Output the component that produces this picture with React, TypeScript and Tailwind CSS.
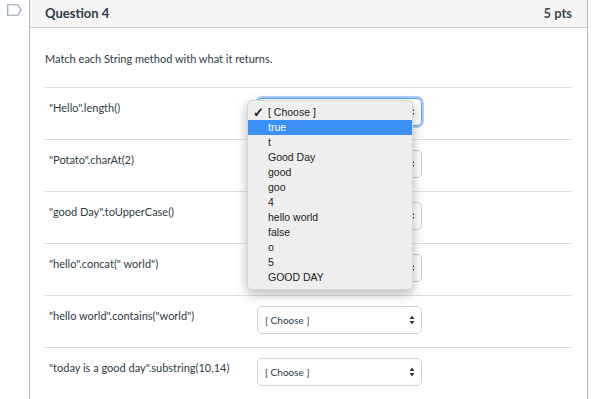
import React from "react";

const rows = [
  '"Hello".length()',
  '"Potato".charAt(2)',
  '"good Day".toUpperCase()',
  '"hello".concat(" world")',
  '"hello world".contains("world")',
  '"today is a good day".substring(10,14)',
];

const options = [
  "[ Choose ]",
  "true",
  "t",
  "Good Day",
  "good",
  "goo",
  "4",
  "hello world",
  "false",
  "o",
  "5",
  "GOOD DAY",
];

function Arrows() {
  return (
    <svg width="6" height="10" viewBox="0 0 6 10" className="text-[#2d3b45]">
      <path d="M3 0.5 L5.5 4 H0.5 Z" fill="currentColor" />
      <path d="M3 9.5 L5.5 6 H0.5 Z" fill="currentColor" />
    </svg>
  );
}

// covered = the open menu lies over it, so its label can't be seen
function Select({ focused, covered }: { focused?: boolean; covered?: boolean }) {
  return (
    <div
      className={
        "flex items-center justify-between w-[165px] h-[28px] rounded-[5px] bg-white pl-[7px] pr-[6px] text-[10px] text-[#2d3b45] " +
        (focused
          ? "border border-[#5aa1ee] shadow-[0_0_0_2px_rgba(110,170,240,0.55)]"
          : "border border-[#c7cdd1]")
      }
    >
      <span>{covered ? "" : "[ Choose ]"}</span>
      <Arrows />
    </div>
  );
}

function Menu() {
  return (
    <div className="absolute left-[-10px] top-[12px] w-[166px] rounded-[5px] bg-[#eeeeee] py-[4px] shadow-[0_4px_12px_rgba(0,0,0,0.28)] border border-[#d6d6d6] z-10 font-['Liberation_Sans',Arial,sans-serif] text-[10.5px] text-[#222]">
      {options.map((opt, i) => (
        <div
          key={i}
          className={
            "relative h-[15px] leading-[15px] pl-[20px] " +
            (i === 1 ? "bg-[#3a90f4] text-white" : "")
          }
        >
          {i === 0 && (
            <span className="absolute left-[5px] top-0 font-bold text-[13px]">✓</span>
          )}
          {opt}
        </div>
      ))}
    </div>
  );
}

export default function App() {
  return (
    <div className="w-[610px] h-[399px] overflow-hidden bg-white flex font-['Lato',sans-serif] text-[#2d3b45]">
      {/* bookmark gutter */}
      <div className="w-[29px] pt-[4px] pl-[7px]">
        <svg width="15" height="12" viewBox="0 0 15 12">
          <path
            d="M0.75 0.75 H11 L14 6 L11 11.25 H0.75 Z"
            fill="none"
            stroke="#8da2b8"
            strokeWidth="1.2"
          />
        </svg>
      </div>

      {/* question card */}
      <div className="w-[559px] h-full border-l border-r border-[#b5b5b5] flex flex-col">
        <div className="h-[28px] bg-[#f5f5f5] border-b border-[#c7cdd1] flex items-center justify-between pl-[15px] pr-[15px]">
          <h2 className="text-[13px] font-bold">Question 4</h2>
          <span className="text-[13px] font-bold text-[#3d4a54]">5 pts</span>
        </div>

        <div className="px-[15px]">
          <p className="text-[11px] leading-[14px] pt-[24px] pb-[21px]">
            Match each String method with what it returns.
          </p>

          {rows.map((label, i) => (
            <div key={i} className="h-[52px] border-t border-[#dcdfe2] flex">
              <div className="w-[212px] pl-[4px] pt-[13px] text-[11px] leading-[14px]">
                {label}
              </div>
              <div className="relative pt-[10px]">
                <Select focused={i === 0} covered={i < 4} />
                {i === 0 && <Menu />}
              </div>
            </div>
          ))}
        </div>
      </div>
    </div>
  );
}
